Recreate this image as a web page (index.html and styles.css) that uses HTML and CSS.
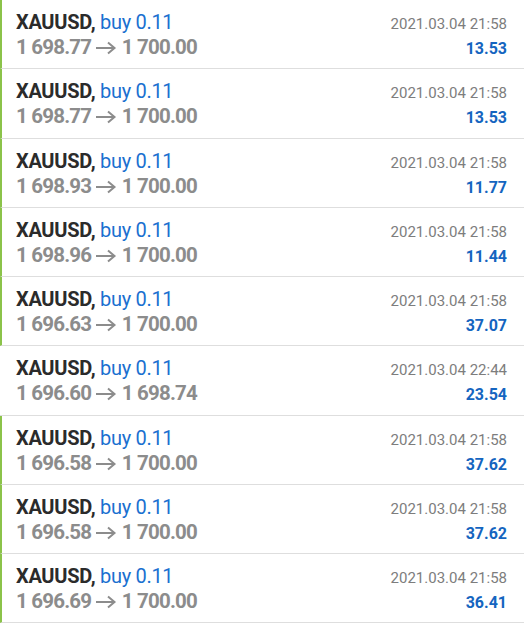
FILE: index.html
```html
<!DOCTYPE html>
<html lang="en">
<head>
  <meta charset="UTF-8">
  <meta name="viewport" content="width=device-width, initial-scale=1.0">
  <title>History</title>
  <link rel="stylesheet" href="styles.css">
</head>
<body>
  <ul class="deals">
    <li class="deal tp">
      <span class="title"><b>XAUUSD,</b> <span class="side">buy 0.11</span></span>
      <span class="time">2021.03.04 21:58</span>
      <span class="prices">1 698.77 <svg class="arrow" viewBox="0 0 22 14"><path d="M1 7h19M13 1.5l6.5 5.5-6.5 5.5"/></svg> 1 700.00</span>
      <span class="profit">13.53</span>
    </li>
    <li class="deal tp">
      <span class="title"><b>XAUUSD,</b> <span class="side">buy 0.11</span></span>
      <span class="time">2021.03.04 21:58</span>
      <span class="prices">1 698.77 <svg class="arrow" viewBox="0 0 22 14"><path d="M1 7h19M13 1.5l6.5 5.5-6.5 5.5"/></svg> 1 700.00</span>
      <span class="profit">13.53</span>
    </li>
    <li class="deal tp">
      <span class="title"><b>XAUUSD,</b> <span class="side">buy 0.11</span></span>
      <span class="time">2021.03.04 21:58</span>
      <span class="prices">1 698.93 <svg class="arrow" viewBox="0 0 22 14"><path d="M1 7h19M13 1.5l6.5 5.5-6.5 5.5"/></svg> 1 700.00</span>
      <span class="profit">11.77</span>
    </li>
    <li class="deal tp">
      <span class="title"><b>XAUUSD,</b> <span class="side">buy 0.11</span></span>
      <span class="time">2021.03.04 21:58</span>
      <span class="prices">1 698.96 <svg class="arrow" viewBox="0 0 22 14"><path d="M1 7h19M13 1.5l6.5 5.5-6.5 5.5"/></svg> 1 700.00</span>
      <span class="profit">11.44</span>
    </li>
    <li class="deal tp">
      <span class="title"><b>XAUUSD,</b> <span class="side">buy 0.11</span></span>
      <span class="time">2021.03.04 21:58</span>
      <span class="prices">1 696.63 <svg class="arrow" viewBox="0 0 22 14"><path d="M1 7h19M13 1.5l6.5 5.5-6.5 5.5"/></svg> 1 700.00</span>
      <span class="profit">37.07</span>
    </li>
    <li class="deal">
      <span class="title"><b>XAUUSD,</b> <span class="side">buy 0.11</span></span>
      <span class="time">2021.03.04 22:44</span>
      <span class="prices">1 696.60 <svg class="arrow" viewBox="0 0 22 14"><path d="M1 7h19M13 1.5l6.5 5.5-6.5 5.5"/></svg> 1 698.74</span>
      <span class="profit">23.54</span>
    </li>
    <li class="deal tp">
      <span class="title"><b>XAUUSD,</b> <span class="side">buy 0.11</span></span>
      <span class="time">2021.03.04 21:58</span>
      <span class="prices">1 696.58 <svg class="arrow" viewBox="0 0 22 14"><path d="M1 7h19M13 1.5l6.5 5.5-6.5 5.5"/></svg> 1 700.00</span>
      <span class="profit">37.62</span>
    </li>
    <li class="deal tp">
      <span class="title"><b>XAUUSD,</b> <span class="side">buy 0.11</span></span>
      <span class="time">2021.03.04 21:58</span>
      <span class="prices">1 696.58 <svg class="arrow" viewBox="0 0 22 14"><path d="M1 7h19M13 1.5l6.5 5.5-6.5 5.5"/></svg> 1 700.00</span>
      <span class="profit">37.62</span>
    </li>
    <li class="deal tp">
      <span class="title"><b>XAUUSD,</b> <span class="side">buy 0.11</span></span>
      <span class="time">2021.03.04 21:58</span>
      <span class="prices">1 696.69 <svg class="arrow" viewBox="0 0 22 14"><path d="M1 7h19M13 1.5l6.5 5.5-6.5 5.5"/></svg> 1 700.00</span>
      <span class="profit">36.41</span>
    </li>
  </ul>
</body>
</html>
```
FILE: styles.css
```css
body {
  margin: 0;
  background: #fff;
  font-family: Roboto, "Noto Sans", sans-serif;
}

.deals {
  list-style: none;
  margin: 0;
  padding: 0;
}

.deal {
  box-sizing: border-box;
  height: 69.25px;
  padding: 10px 17px 0 16px;
  border-bottom: 1px solid #dedede;
  display: grid;
  grid-template-columns: 1fr auto;
  grid-template-rows: 25px 25px;
  align-items: baseline;
  line-height: 25px;
}

/* closed by take profit */
.deal.tp {
  border-left: 2px solid #8bc34a;
  padding-left: 14px;
}

.title {
  font-size: 20px;
  letter-spacing: -0.3px;
  color: #2b2b2b;
}

.title b {
  font-weight: 700;
}

.side {
  color: #1a70d0;
}

.prices {
  font-size: 20.5px;
  font-weight: 700;
  letter-spacing: -0.8px;
  color: #8c8c8c;
  white-space: nowrap;
}

.arrow {
  width: 22px;
  height: 14px;
  margin: 0 1px 0 -1px;
  vertical-align: -1px;
  fill: none;
  stroke: #8c8c8c;
  stroke-width: 2;
}

.time {
  font-size: 15px;
  color: #7d7d7d;
  text-align: right;
}

.profit {
  font-size: 16px;
  font-weight: 700;
  color: #1565c0;
  text-align: right;
}
```
